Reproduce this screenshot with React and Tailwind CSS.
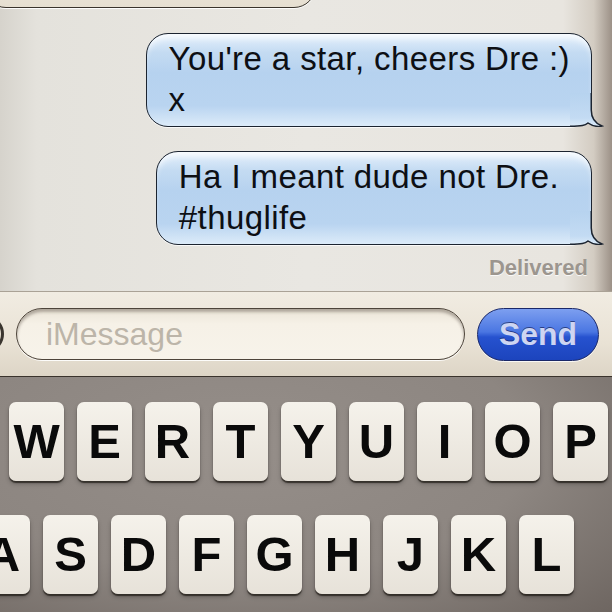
import React from 'react';

const row1 = ['W', 'E', 'R', 'T', 'Y', 'U', 'I', 'O', 'P'];
const row2 = ['A', 'S', 'D', 'F', 'G', 'H', 'J', 'K', 'L'];

function Tail() {
  return (
    <svg className="absolute right-[-12px] bottom-0" width="34" height="34" viewBox="0 0 34 34">
      <defs>
        <linearGradient id="tailfill" x1="0" y1="0" x2="0" y2="1">
          <stop offset="0" stopColor="#b7d3ef" />
          <stop offset="0.75" stopColor="#c3dbf3" />
          <stop offset="1" stopColor="#dcebf9" />
        </linearGradient>
      </defs>
      <path
        d="M0 0 H21.25 V17 C21.25 25 25.5 30.5 32 33 C27 34 21.5 32.5 18 30 C15 32.5 12 33.25 0 33.25 Z"
        fill="url(#tailfill)"
      />
      <path
        d="M21.25 0 V17 C21.25 25 25.5 30.5 32 33 C27 34 21.5 32.5 18 30 C15 32.5 12 33.25 0 33.25"
        fill="none"
        stroke="#1c2430"
        strokeWidth="1.5"
      />
    </svg>
  );
}

function Bubble({ lines, className, pad }) {
  return (
    <div className={`relative ${className}`}>
      <div className={`rounded-[22px] border-[1.5px] border-[#1c2430] bg-[linear-gradient(to_bottom,#e6f1fc_0%,#c4dbf2_20%,#b6d2ef_42%,#b9d4f0_78%,#dcebf9_100%)] pl-[22px] ${pad} pt-[4px] pb-[6px] shadow-[inset_0_7px_6px_-3px_rgba(255,255,255,0.8),0_1px_0_rgba(255,255,255,0.8)]`}>
        {lines.map((l) => (
          <div key={l} className="text-[33px] leading-[41px] tracking-[0.4px] text-[#0d0f14] whitespace-nowrap">
            {l}
          </div>
        ))}
      </div>
      <Tail />
    </div>
  );
}

function Key({ letter }) {
  return (
    <div className="w-[55px] h-[79px] shrink-0 rounded-[7px] bg-[linear-gradient(to_bottom,#f5f2eb,#e7e2d9)] shadow-[0_2px_1px_rgba(30,25,20,0.7),0_3px_4px_rgba(0,0,0,0.25)] flex items-center justify-center text-[49px] font-bold text-[#0a0a0a] leading-none">
      {letter}
    </div>
  );
}

export default function App() {
  return (
    <div className="w-[612px] h-[612px] overflow-hidden flex flex-col font-['Liberation_Sans',Arial,sans-serif]">
      {/* messages */}
      <div className="h-[291px] shrink-0 overflow-hidden flex flex-col items-end pr-[20px] bg-[linear-gradient(to_right,#d6d3cc_0%,#e4e2dc_6%,#e9e7e2_50%,#e8e5df_92%,#d3ccc2_97%,#9c9187_100%)]">
        <div className="self-start -ml-[16px] -mt-[52px] w-[332px] h-[60px] shrink-0 rounded-b-[22px] border-[1.5px] border-[#3a342c] bg-[linear-gradient(to_bottom,#f2ede3,#e6dfd1)] shadow-[0_1px_0_rgba(255,255,255,0.9)]" />
        <Bubble className="mt-[25px]" pad="pr-[21px]" lines={["You're a star, cheers Dre :)", 'x']} />
        <Bubble className="mt-[24px]" pad="pr-[32px]" lines={['Ha I meant dude not Dre.', '#thuglife']} />
        <div className="mt-[10px] mr-[4px] text-[22px] leading-[25px] font-bold text-[#9c968f] [text-shadow:0_1px_0_rgba(255,255,255,0.8)]">
          Delivered
        </div>
      </div>

      {/* input bar */}
      <div className="h-px bg-[#aaa296] shrink-0" />
      <div className="h-[84px] shrink-0 flex items-center gap-[12px] bg-[linear-gradient(to_bottom,#f1ece2,#e9e2d5_60%,#ddd5c6)]">
        <div className="-ml-[36px] w-[40px] h-[38px] shrink-0 rounded-full border-[3px] border-[#3a352f] bg-[#e6dfd1]" />
        <div className="w-[449px] h-[52px] shrink-0 rounded-full border-[1.5px] border-[#4d443a] bg-[linear-gradient(to_bottom,#ebe4d7,#f6f1e7_30%,#f7f3ea)] shadow-[inset_0_3px_3px_rgba(60,50,40,0.35),0_1px_0_rgba(255,255,255,0.9)] flex items-center pl-[29px]">
          <span className="text-[32px] text-[#bcb5a9]">iMessage</span>
        </div>
        <div className="w-[122px] h-[53px] shrink-0 rounded-full border-[1.5px] border-[#1a2868] bg-[linear-gradient(to_bottom,#7d9ff0_0%,#4a76e2_45%,#2652cf_55%,#1c44bd_100%)] shadow-[0_1px_0_rgba(255,255,255,0.8)] flex items-center justify-center">
          <span className="text-[32px] font-bold text-[#cdd5f2] [text-shadow:0_-1px_0_rgba(10,20,70,0.6)]">Send</span>
        </div>
      </div>
      <div className="h-px bg-[#3a332c] shrink-0" />

      {/* keyboard */}
      <div className="flex-1 flex flex-col gap-[34px] pt-[25px] bg-[radial-gradient(ellipse_at_40%_30%,#958e89_0%,#8d8681_55%,#6e6661_100%)]">
        <div className="flex gap-[13px] pl-[9px]">
          {row1.map((k) => (
            <Key key={k} letter={k} />
          ))}
        </div>
        <div className="flex gap-[13px] -ml-[25px]">
          {row2.map((k) => (
            <Key key={k} letter={k} />
          ))}
        </div>
      </div>
    </div>
  );
}
